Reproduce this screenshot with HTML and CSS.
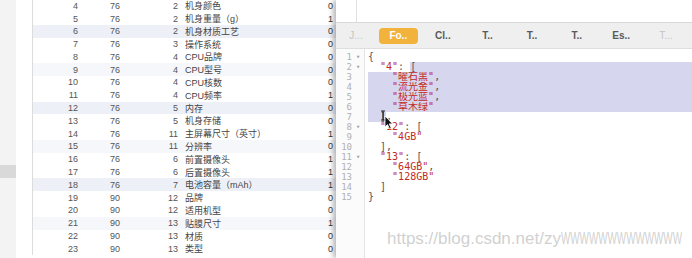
FILE: index.html
```html
<!DOCTYPE html>
<html lang="zh">
<head>
<meta charset="utf-8">
<title>JSON</title>
<link rel="stylesheet" href="styles.css">
</head>
<body>
<div class="screen">
  <div class="sheet">
    <div class="side">
      <div class="side-sel"></div>
    </div>
    <div class="table">
      <div class="row"><span class="c0"></span><span class="id">4</span><span class="pid">76</span><span class="gid">2</span><span class="name">机身颜色</span><span class="flag">0</span></div>
      <div class="row"><span class="c0"></span><span class="id">5</span><span class="pid">76</span><span class="gid">2</span><span class="name">机身重量（g）</span><span class="flag">1</span></div>
      <div class="row alt"><span class="c0"></span><span class="id">6</span><span class="pid">76</span><span class="gid">2</span><span class="name">机身材质工艺</span><span class="flag">0</span></div>
      <div class="row"><span class="c0"></span><span class="id">7</span><span class="pid">76</span><span class="gid">3</span><span class="name">操作系统</span><span class="flag">0</span></div>
      <div class="row"><span class="c0"></span><span class="id">8</span><span class="pid">76</span><span class="gid">4</span><span class="name">CPU品牌</span><span class="flag">0</span></div>
      <div class="row alt2"><span class="c0"></span><span class="id">9</span><span class="pid">76</span><span class="gid">4</span><span class="name">CPU型号</span><span class="flag">0</span></div>
      <div class="row"><span class="c0"></span><span class="id">10</span><span class="pid">76</span><span class="gid">4</span><span class="name">CPU核数</span><span class="flag">0</span></div>
      <div class="row"><span class="c0"></span><span class="id">11</span><span class="pid">76</span><span class="gid">4</span><span class="name">CPU频率</span><span class="flag">1</span></div>
      <div class="row alt"><span class="c0"></span><span class="id">12</span><span class="pid">76</span><span class="gid">5</span><span class="name">内存</span><span class="flag">0</span></div>
      <div class="row"><span class="c0"></span><span class="id">13</span><span class="pid">76</span><span class="gid">5</span><span class="name">机身存储</span><span class="flag">0</span></div>
      <div class="row"><span class="c0"></span><span class="id">14</span><span class="pid">76</span><span class="gid">11</span><span class="name">主屏幕尺寸（英寸）</span><span class="flag">1</span></div>
      <div class="row alt2"><span class="c0"></span><span class="id">15</span><span class="pid">76</span><span class="gid">11</span><span class="name">分辨率</span><span class="flag">0</span></div>
      <div class="row"><span class="c0"></span><span class="id">16</span><span class="pid">76</span><span class="gid">6</span><span class="name">前置摄像头</span><span class="flag">1</span></div>
      <div class="row"><span class="c0"></span><span class="id">17</span><span class="pid">76</span><span class="gid">6</span><span class="name">后置摄像头</span><span class="flag">1</span></div>
      <div class="row alt"><span class="c0"></span><span class="id">18</span><span class="pid">76</span><span class="gid">7</span><span class="name">电池容量（mAh）</span><span class="flag">1</span></div>
      <div class="row"><span class="c0"></span><span class="id">19</span><span class="pid">90</span><span class="gid">12</span><span class="name">品牌</span><span class="flag">0</span></div>
      <div class="row"><span class="c0"></span><span class="id">20</span><span class="pid">90</span><span class="gid">12</span><span class="name">适用机型</span><span class="flag">0</span></div>
      <div class="row alt2"><span class="c0"></span><span class="id">21</span><span class="pid">90</span><span class="gid">13</span><span class="name">贴膜尺寸</span><span class="flag">1</span></div>
      <div class="row"><span class="c0"></span><span class="id">22</span><span class="pid">90</span><span class="gid">13</span><span class="name">材质</span><span class="flag">0</span></div>
      <div class="row"><span class="c0"></span><span class="id">23</span><span class="pid">90</span><span class="gid">13</span><span class="name">类型</span><span class="flag">0</span></div>
    </div>
  </div>

  <div class="win">
    <div class="win-top"><div class="win-top-gutter"></div></div>
    <div class="tabs">
      <span class="tab dim">J...</span>
      <span class="tab"><span class="tab-on">Fo..</span></span>
      <span class="tab">Cl..</span>
      <span class="tab">T..</span>
      <span class="tab">T..</span>
      <span class="tab">T..</span>
      <span class="tab">Es..</span>
      <span class="tab dim">T...</span>
    </div>
    <div class="editor">
      <div class="gutter">
        <div class="gl"><span class="ln">1</span><span class="fold">▾</span></div>
        <div class="gl"><span class="ln">2</span><span class="fold">▾</span></div>
        <div class="gl"><span class="ln">3</span><span class="fold"></span></div>
        <div class="gl"><span class="ln">4</span><span class="fold"></span></div>
        <div class="gl"><span class="ln">5</span><span class="fold"></span></div>
        <div class="gl"><span class="ln">6</span><span class="fold"></span></div>
        <div class="gl"><span class="ln">7</span><span class="fold"></span></div>
        <div class="gl"><span class="ln">8</span><span class="fold">▾</span></div>
        <div class="gl"><span class="ln">9</span><span class="fold"></span></div>
        <div class="gl"><span class="ln">10</span><span class="fold"></span></div>
        <div class="gl"><span class="ln">11</span><span class="fold">▾</span></div>
        <div class="gl"><span class="ln">12</span><span class="fold"></span></div>
        <div class="gl"><span class="ln">13</span><span class="fold"></span></div>
        <div class="gl"><span class="ln">14</span><span class="fold"></span></div>
        <div class="gl"><span class="ln">15</span><span class="fold"></span></div>
      </div>
      <div class="code">
        <div class="cl"><span class="p">{</span></div>
        <div class="cl split"><span class="pre">  <span class="s">"4"</span><span class="p">: </span></span><span class="sel grow"><span class="p">[</span></span></div>
        <div class="cl sel">    <span class="s">"曜石黑"</span><span class="p">,</span></div>
        <div class="cl sel">    <span class="s">"流光金"</span><span class="p">,</span></div>
        <div class="cl sel">    <span class="s">"极光蓝"</span><span class="p">,</span></div>
        <div class="cl sel">    <span class="s">"草木绿"</span></div>
        <div class="cl"><span class="sel">  <span class="p">]</span></span><span class="p">,</span></div>
        <div class="cl">  <span class="s">"12"</span><span class="p">: [</span></div>
        <div class="cl">    <span class="s">"4GB"</span></div>
        <div class="cl"><span class="p">  ],</span></div>
        <div class="cl">  <span class="s">"13"</span><span class="p">: [</span></div>
        <div class="cl">    <span class="s">"64GB"</span><span class="p">,</span></div>
        <div class="cl">    <span class="s">"128GB"</span></div>
        <div class="cl"><span class="p">  ]</span></div>
        <div class="cl"><span class="p">}</span></div>
        <svg class="pointer" width="16" height="20" viewBox="0 0 16 20">
          <path d="M3 1 V10 M1 1 H5 M1 10 H5" stroke="#222" stroke-width="1.2" fill="none"/>
          <path d="M5 6 L5 17 L7.5 14.6 L9.6 19 L11.3 18.2 L9.2 13.9 L12.6 13.9 Z" fill="#111" stroke="#fff" stroke-width="0.8"/>
        </svg>
      </div>
    </div>
  </div>
</div>
<div class="watermark">https://blog.csdn.net/zy<span class="ws">WWWWWWWWWWWWW</span></div>
</body>
</html>
```
FILE: styles.css
```css
html, body {
  margin: 0;
  padding: 0;
}
body {
  width: 692px;
  height: 258px;
  overflow: hidden;
  background: #ffffff;
  position: relative;
  font-family: "Liberation Sans", "Noto Sans CJK SC", sans-serif;
}
.screen {
  display: flex;
  height: 258px;
}

/* left sheet */
.sheet {
  width: 336px;
  flex: none;
  display: flex;
  background: #ffffff;
  overflow: hidden;
}
.side {
  width: 16px;
  flex: none;
  background: #f3f3f3;
  display: flex;
  flex-direction: column;
  padding-top: 165px;
}
.side-sel {
  height: 13px;
  background: #d9d9d9;
}
.table {
  flex: 1;
  margin-top: -0.7px;
}
.row {
  display: flex;
  align-items: center;
  height: 12.8px;
  font-size: 9px;
  color: #4a4a4a;
}
.row.alt {
  background: #eef0f8;
}
.row.alt2 {
  background: #f6f7fb;
}
.c0 {
  width: 16px;
  height: 100%;
  flex: none;
  border-right: 1px solid #dcdcdc;
  background: #ffffff;
}
.id {
  width: 45px;
  flex: none;
  text-align: right;
  color: #555;
}
.pid {
  width: 74px;
  flex: none;
  text-align: center;
  color: #555;
}
.gid {
  width: 26px;
  flex: none;
  text-align: right;
  color: #555;
}
.name {
  flex: 1;
  padding-left: 7px;
  color: #444;
  white-space: nowrap;
}
.flag {
  width: 14px;
  flex: none;
  text-align: right;
  padding-right: 3px;
  color: #333;
}

/* right window */
.win {
  flex: 1;
  display: flex;
  flex-direction: column;
  background: #ffffff;
  box-shadow: -3px 0 5px rgba(0, 0, 0, 0.28);
  position: relative;
  z-index: 1;
}
.win-top {
  height: 22px;
  flex: none;
  display: flex;
}
.win-top-gutter {
  width: 20px;
  border-right: 1px solid #e2e2e2;
}
.tabs {
  height: 25px;
  flex: none;
  display: flex;
  align-items: center;
  background: #efefef;
  border-top: 1px solid #d9d9d9;
  border-bottom: 1px solid #dedede;
  font-size: 10px;
  font-weight: bold;
  color: #5a5a5a;
}
.tab {
  width: 44.6px;
  flex: none;
  display: flex;
  justify-content: center;
  align-items: center;
}
.tab:first-child {
  width: 40px;
}
.tab.dim {
  color: #c4c4c4;
  font-weight: normal;
}
.tab-on {
  width: 39px;
  height: 16px;
  border-radius: 4px;
  background: #f2b33d;
  color: #ffffff;
  display: flex;
  align-items: center;
  justify-content: center;
  font-weight: bold;
}
.editor {
  flex: 1;
  display: flex;
  padding-top: 2.5px;
  font-family: "DejaVu Sans Mono", "Noto Sans CJK SC", monospace;
}
.gutter {
  width: 28px;
  flex: none;
  border-right: 1px solid #e4e4e4;
  margin-top: -2.5px;
  padding-top: 2.5px;
  background: #fbfbfb;
}
.gl {
  height: 10px;
  display: flex;
  align-items: center;
  font-size: 9px;
  color: #b0b0b0;
}
.ln {
  width: 16px;
  text-align: right;
}
.fold {
  width: 12px;
  text-align: center;
  font-size: 7px;
  color: #a0a0a0;
}
.code {
  flex: 1;
  padding-left: 3px;
  position: relative;
}
.cl {
  height: 10px;
  line-height: 10px;
  font-size: 10px;
  white-space: pre;
  color: #555;
  overflow: hidden;
}
.cl.split {
  display: flex;
}
.pre {
  white-space: pre;
}
.sel {
  background: #d6d6ee;
  white-space: pre;
}
.grow {
  flex: 1;
}
.s {
  color: #c22a26;
}
.p {
  color: #555;
}
.pointer {
  position: absolute;
  left: 15px;
  top: 58px;
}

.watermark {
  position: absolute;
  left: 387px;
  top: 229px;
  width: 300px;
  overflow: hidden;
  font-size: 17px;
  color: rgba(200, 200, 200, 0.85);
  white-space: nowrap;
  z-index: 2;
}
.ws {
  display: inline-block;
  transform: scaleX(0.58);
  transform-origin: left center;
}
```
